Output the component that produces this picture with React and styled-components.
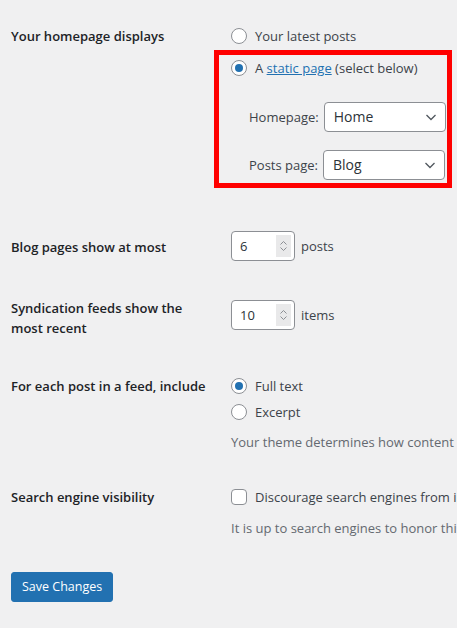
import React from "react";
import styled, { createGlobalStyle } from "styled-components";

const GlobalStyle = createGlobalStyle`
  html, body {
    margin: 0;
    background: #f0f0f1;
    overflow: hidden;
  }
  body {
    font-family: "Open Sans", "Noto Sans", sans-serif;
    font-size: 13px;
    line-height: 20px;
    color: #3c434a;
  }
`;

const Page = styled.div`
  width: 900px;
  padding: 26px 0 40px 11px;
`;

const Row = styled.div`
  display: grid;
  grid-template-columns: 220px auto;
  align-items: start;
  margin-top: ${p => p.$top || 0}px;
`;

const Label = styled.div`
  width: 195px;
  font-weight: 600;
  color: #1d2327;
  padding-top: ${p => p.$pad || 0}px;
`;

const Field = styled.div`
  position: relative;
  display: flex;
  flex-direction: column;
  align-items: flex-start;
  gap: ${p => p.$gap || 0}px;
  margin-top: ${p => p.$top || 0}px;
`;

const Option = styled.label`
  display: flex;
  align-items: center;
  gap: 8px;
  height: 20px;
  white-space: nowrap;
`;

const Radio = styled.span`
  box-sizing: border-box;
  width: 16px;
  height: 16px;
  flex: none;
  border: 1px solid #8c8f94;
  border-radius: 50%;
  background: #fff;
  display: grid;
  place-items: center;

  &::after {
    content: "";
    width: 8px;
    height: 8px;
    border-radius: 50%;
    background: ${p => (p.$checked ? "#2271b1" : "transparent")};
  }
`;

const Checkbox = styled.span`
  box-sizing: border-box;
  width: 16px;
  height: 16px;
  flex: none;
  border: 1px solid #8c8f94;
  border-radius: 4px;
  background: #fff;
`;

const Link = styled.a`
  color: #2271b1;
  text-decoration: underline;
`;

const PageSelects = styled.div`
  display: flex;
  flex-direction: column;
  gap: 18px;
  margin-top: 24px;
  margin-left: 18px;
`;

const SelectRow = styled.label`
  display: flex;
  align-items: center;
  gap: 5px;
  white-space: nowrap;
`;

const Select = styled.div`
  box-sizing: border-box;
  width: 122px;
  height: 30px;
  display: flex;
  align-items: center;
  justify-content: space-between;
  padding: 0 8px 0 9px;
  background: #fff;
  border: 1px solid #8c8f94;
  border-radius: 4px;
  color: #2c3338;
  font-size: 14px;

  svg {
    width: 12px;
    height: 12px;
  }
`;

const Inline = styled.div`
  display: flex;
  align-items: center;
  gap: 6px;
`;

const NumberBox = styled.div`
  box-sizing: border-box;
  width: 64px;
  height: 30px;
  display: flex;
  align-items: center;
  background: #fff;
  border: 1px solid #8c8f94;
  border-radius: 4px;
  color: #2c3338;
`;

const NumberValue = styled.span`
  flex: 1;
  padding-left: 8px;
`;

const Spinner = styled.span`
  width: 15px;
  height: 22px;
  margin-right: 3px;
  background: #e9e9ea;
  display: grid;
  place-items: center;

  svg {
    width: 9px;
    height: 16px;
  }
`;

const Description = styled.p`
  margin: ${p => p.$top || 0}px 0 0;
  color: #646970;
  white-space: nowrap;
`;

const Button = styled.button`
  margin-top: 34px;
  height: 30px;
  padding: 0 10px;
  background: #2271b1;
  border: 1px solid #2271b1;
  border-radius: 3px;
  color: #fff;
  font-family: inherit;
  font-size: 12.5px;
  line-height: 28px;
`;

const Highlight = styled.div`
  position: absolute;
  left: -17px;
  top: 24px;
  width: 238px;
  height: 138px;
  box-sizing: border-box;
  border: 5px solid #f00;
  pointer-events: none;
`;

const Chevron = () => (
  <svg viewBox="0 0 12 12" fill="none" stroke="#50575e" strokeWidth="1.3">
    <path d="M1.5 4l4.5 4.5L10.5 4" />
  </svg>
);

const SpinIcon = () => (
  <svg viewBox="0 0 9 16" fill="none" stroke="#8c8f94" strokeWidth="1">
    <path d="M1.5 6.5L4.5 3.5l3 3M1.5 9.5l3 3 3-3" />
  </svg>
);

const NumberInput = ({ value, unit }) => (
  <Inline>
    <NumberBox>
      <NumberValue>{value}</NumberValue>
      <Spinner>
        <SpinIcon />
      </Spinner>
    </NumberBox>
    <span>{unit}</span>
  </Inline>
);

const App = () => {
  return (
    <Page>
      <GlobalStyle />

      <Row>
        <Label>Your homepage displays</Label>
        <Field $gap={12}>
          <Option>
            <Radio />
            Your latest posts
          </Option>
          <Option>
            <Radio $checked />
            <span>
              A <Link>static page</Link> (select below)
            </span>
          </Option>
          <Highlight />
        </Field>
      </Row>
      <Row>
        <span />
        <PageSelects>
          <SelectRow>
            Homepage:
            <Select>
              Home
              <Chevron />
            </Select>
          </SelectRow>
          <SelectRow>
            Posts page:
            <Select>
              Blog
              <Chevron />
            </Select>
          </SelectRow>
        </PageSelects>
      </Row>

      <Row $top={51}>
        <Label $pad={6}>Blog pages show at most</Label>
        <NumberInput value="6" unit="posts" />
      </Row>

      <Row $top={37}>
        <Label>Syndication feeds show the most recent</Label>
        <Field $top={2}>
          <NumberInput value="10" unit="items" />
        </Field>
      </Row>

      <Row $top={38}>
        <Label>For each post in a feed, include</Label>
        <Field $gap={6}>
          <Option>
            <Radio $checked />
            Full text
          </Option>
          <Option>
            <Radio />
            Excerpt
          </Option>
          <Description $top={4}>
            Your theme determines how content is displayed in browsers. Learn more about feeds.
          </Description>
        </Field>
      </Row>

      <Row $top={35}>
        <Label>Search engine visibility</Label>
        <Field $gap={11}>
          <Option>
            <Checkbox />
            Discourage search engines from indexing this site
          </Option>
          <Description>It is up to search engines to honor this request.</Description>
        </Field>
      </Row>

      <Button>Save Changes</Button>
    </Page>
  );
};

export default App;
